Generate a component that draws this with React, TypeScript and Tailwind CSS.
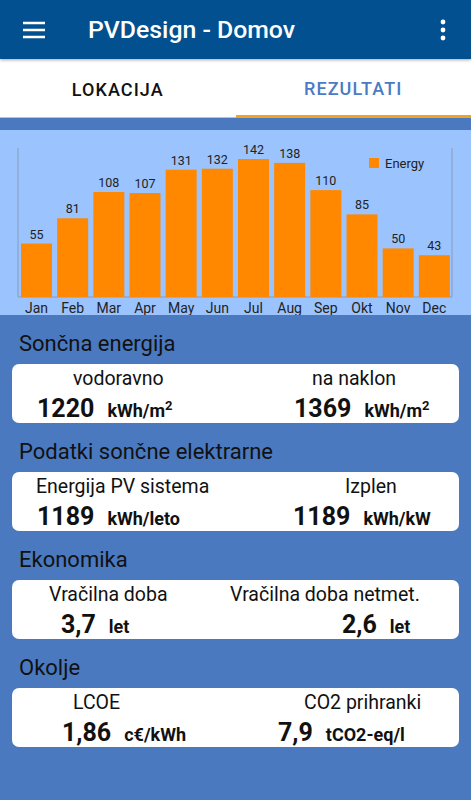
import type { ReactNode } from "react";

const months = ["Jan", "Feb", "Mar", "Apr", "May", "Jun", "Jul", "Aug", "Sep", "Okt", "Nov", "Dec"];
const energy = [55, 81, 108, 107, 131, 132, 142, 138, 110, 85, 50, 43];

function EnergyChart() {
  const left = 18;
  const right = 452;
  const bottom = 167;
  const pitch = (right - left) / 12;
  return (
    <svg width="471" height="185" viewBox="0 0 471 185" className="block">
      <line x1={left} y1="18" x2={left} y2={bottom} stroke="#8a9bb8" strokeWidth="1" />
      <line x1={right} y1="18" x2={right} y2={bottom} stroke="#8a9bb8" strokeWidth="1" />
      <line x1={left} y1={bottom} x2={right} y2={bottom} stroke="#8a9bb8" strokeWidth="1" />
      {energy.map((v, i) => {
        const h = (v * 138) / 142;
        const x = left + 3 + i * pitch;
        const cx = x + 15.5;
        return (
          <g key={months[i]}>
            <rect x={x} y={bottom - h} width="31" height={h} fill="#ff8800" />
            <text x={cx} y={bottom - h - 5} textAnchor="middle" fontSize="12.5" fill="#222" fontFamily="Roboto, sans-serif">
              {v}
            </text>
            <text x={cx} y="182.5" textAnchor="middle" fontSize="14" fill="#222" fontFamily="Roboto, sans-serif">
              {months[i]}
            </text>
          </g>
        );
      })}
      <rect x="369" y="28" width="10" height="10" fill="#ff8800" />
      <text x="385" y="37.5" fontSize="13" fill="#222" fontFamily="Roboto, sans-serif">
        Energy
      </text>
    </svg>
  );
}

type Cell = { label: string; value: string; unit: ReactNode };

type CardDef = {
  title: string;
  left: Cell;
  right: Cell;
  labelW: string;
  labelPl: string;
  valueW: string;
  valuePl: string;
};

const m2 = (
  <>
    kWh/m<sup className="top-[-7px] text-[13px]">2</sup>
  </>
);

const cards: CardDef[] = [
  {
    title: "Sončna energija",
    left: { label: "vodoravno", value: "1220", unit: m2 },
    right: { label: "na naklon", value: "1369", unit: m2 },
    labelW: "w-[300px]",
    labelPl: "pl-[61px]",
    valueW: "w-[282px]",
    valuePl: "pl-[25px]",
  },
  {
    title: "Podatki sončne elektrarne",
    left: { label: "Energija PV sistema", value: "1189", unit: "kWh/leto" },
    right: { label: "Izplen", value: "1189", unit: "kWh/kW" },
    labelW: "w-[333px]",
    labelPl: "pl-[24px]",
    valueW: "w-[281px]",
    valuePl: "pl-[25px]",
  },
  {
    title: "Ekonomika",
    left: { label: "Vračilna doba", value: "3,7", unit: "let" },
    right: { label: "Vračilna doba netmet.", value: "2,6", unit: "let" },
    labelW: "w-[218px]",
    labelPl: "pl-[37px]",
    valueW: "w-[330px]",
    valuePl: "pl-[49px]",
  },
  {
    title: "Okolje",
    left: { label: "LCOE", value: "1,86", unit: "c€/kWh" },
    right: { label: "CO2 prihranki", value: "7,9", unit: "tCO2-eq/l" },
    labelW: "w-[292px]",
    labelPl: "pl-[61px]",
    valueW: "w-[266px]",
    valuePl: "pl-[50px]",
  },
];

function Value({ cell }: { cell: Cell }) {
  return (
    <div className="flex items-baseline font-bold">
      <span className="text-[25px]">{cell.value}</span>
      <span className="ml-[13px] text-[18px]">{cell.unit}</span>
    </div>
  );
}

function ResultCard({ c }: { c: CardDef }) {
  return (
    <div>
      <div className="pl-[7px] pt-[15px] pb-[6px] text-[22px] leading-[28px] text-[#111]">{c.title}</div>
      <div className="h-[59px] rounded-[7px] bg-white pt-[4px] text-[#111]">
        <div className="flex text-[19.5px] leading-[22px]">
          <div className={`${c.labelW} ${c.labelPl} shrink-0`}>{c.left.label}</div>
          <div>{c.right.label}</div>
        </div>
        <div className="mt-[5px] flex leading-[28px]">
          <div className={`${c.valueW} ${c.valuePl} shrink-0`}>
            <Value cell={c.left} />
          </div>
          <Value cell={c.right} />
        </div>
      </div>
    </div>
  );
}

export default function App() {
  return (
    <div className="flex h-[800px] w-[471px] flex-col overflow-hidden bg-[#4a79c0] font-['Roboto',sans-serif]">
      <header className="relative z-10 flex h-[59px] shrink-0 items-center bg-[#02508f] text-white shadow-[0_1px_3px_rgba(0,0,0,0.35)]">
        <svg width="24" height="18" viewBox="0 0 24 18" className="ml-[22px]" aria-hidden="true">
          <path d="M1 2h22M1 9h22M1 16h22" stroke="white" strokeWidth="2.4" />
        </svg>
        <div className="ml-[42px] text-[24.8px] font-medium">PVDesign - Domov</div>
        <svg width="6" height="22" viewBox="0 0 6 22" className="ml-auto mr-[25px]" aria-hidden="true">
          <circle cx="3" cy="3" r="2.4" fill="white" />
          <circle cx="3" cy="11" r="2.4" fill="white" />
          <circle cx="3" cy="19" r="2.4" fill="white" />
        </svg>
      </header>

      <nav className="flex h-[59px] shrink-0 bg-white text-[18px] font-medium tracking-[0.06em]">
        <div className="flex flex-1 items-center justify-center border-b border-[#b9c2cf] pt-[3px] text-[#111]">
          LOKACIJA
        </div>
        <div className="flex flex-1 items-center justify-center border-b-[3px] border-[#f0a424] pt-[3px] text-[#4a7bc4]">
          REZULTATI
        </div>
      </nav>

      <div className="mt-[12px] h-[185px] shrink-0 bg-[#9bc3fe]">
        <EnergyChart />
      </div>

      <div className="px-[12px]">
        {cards.map((c) => (
          <ResultCard key={c.title} c={c} />
        ))}
      </div>
    </div>
  );
}
